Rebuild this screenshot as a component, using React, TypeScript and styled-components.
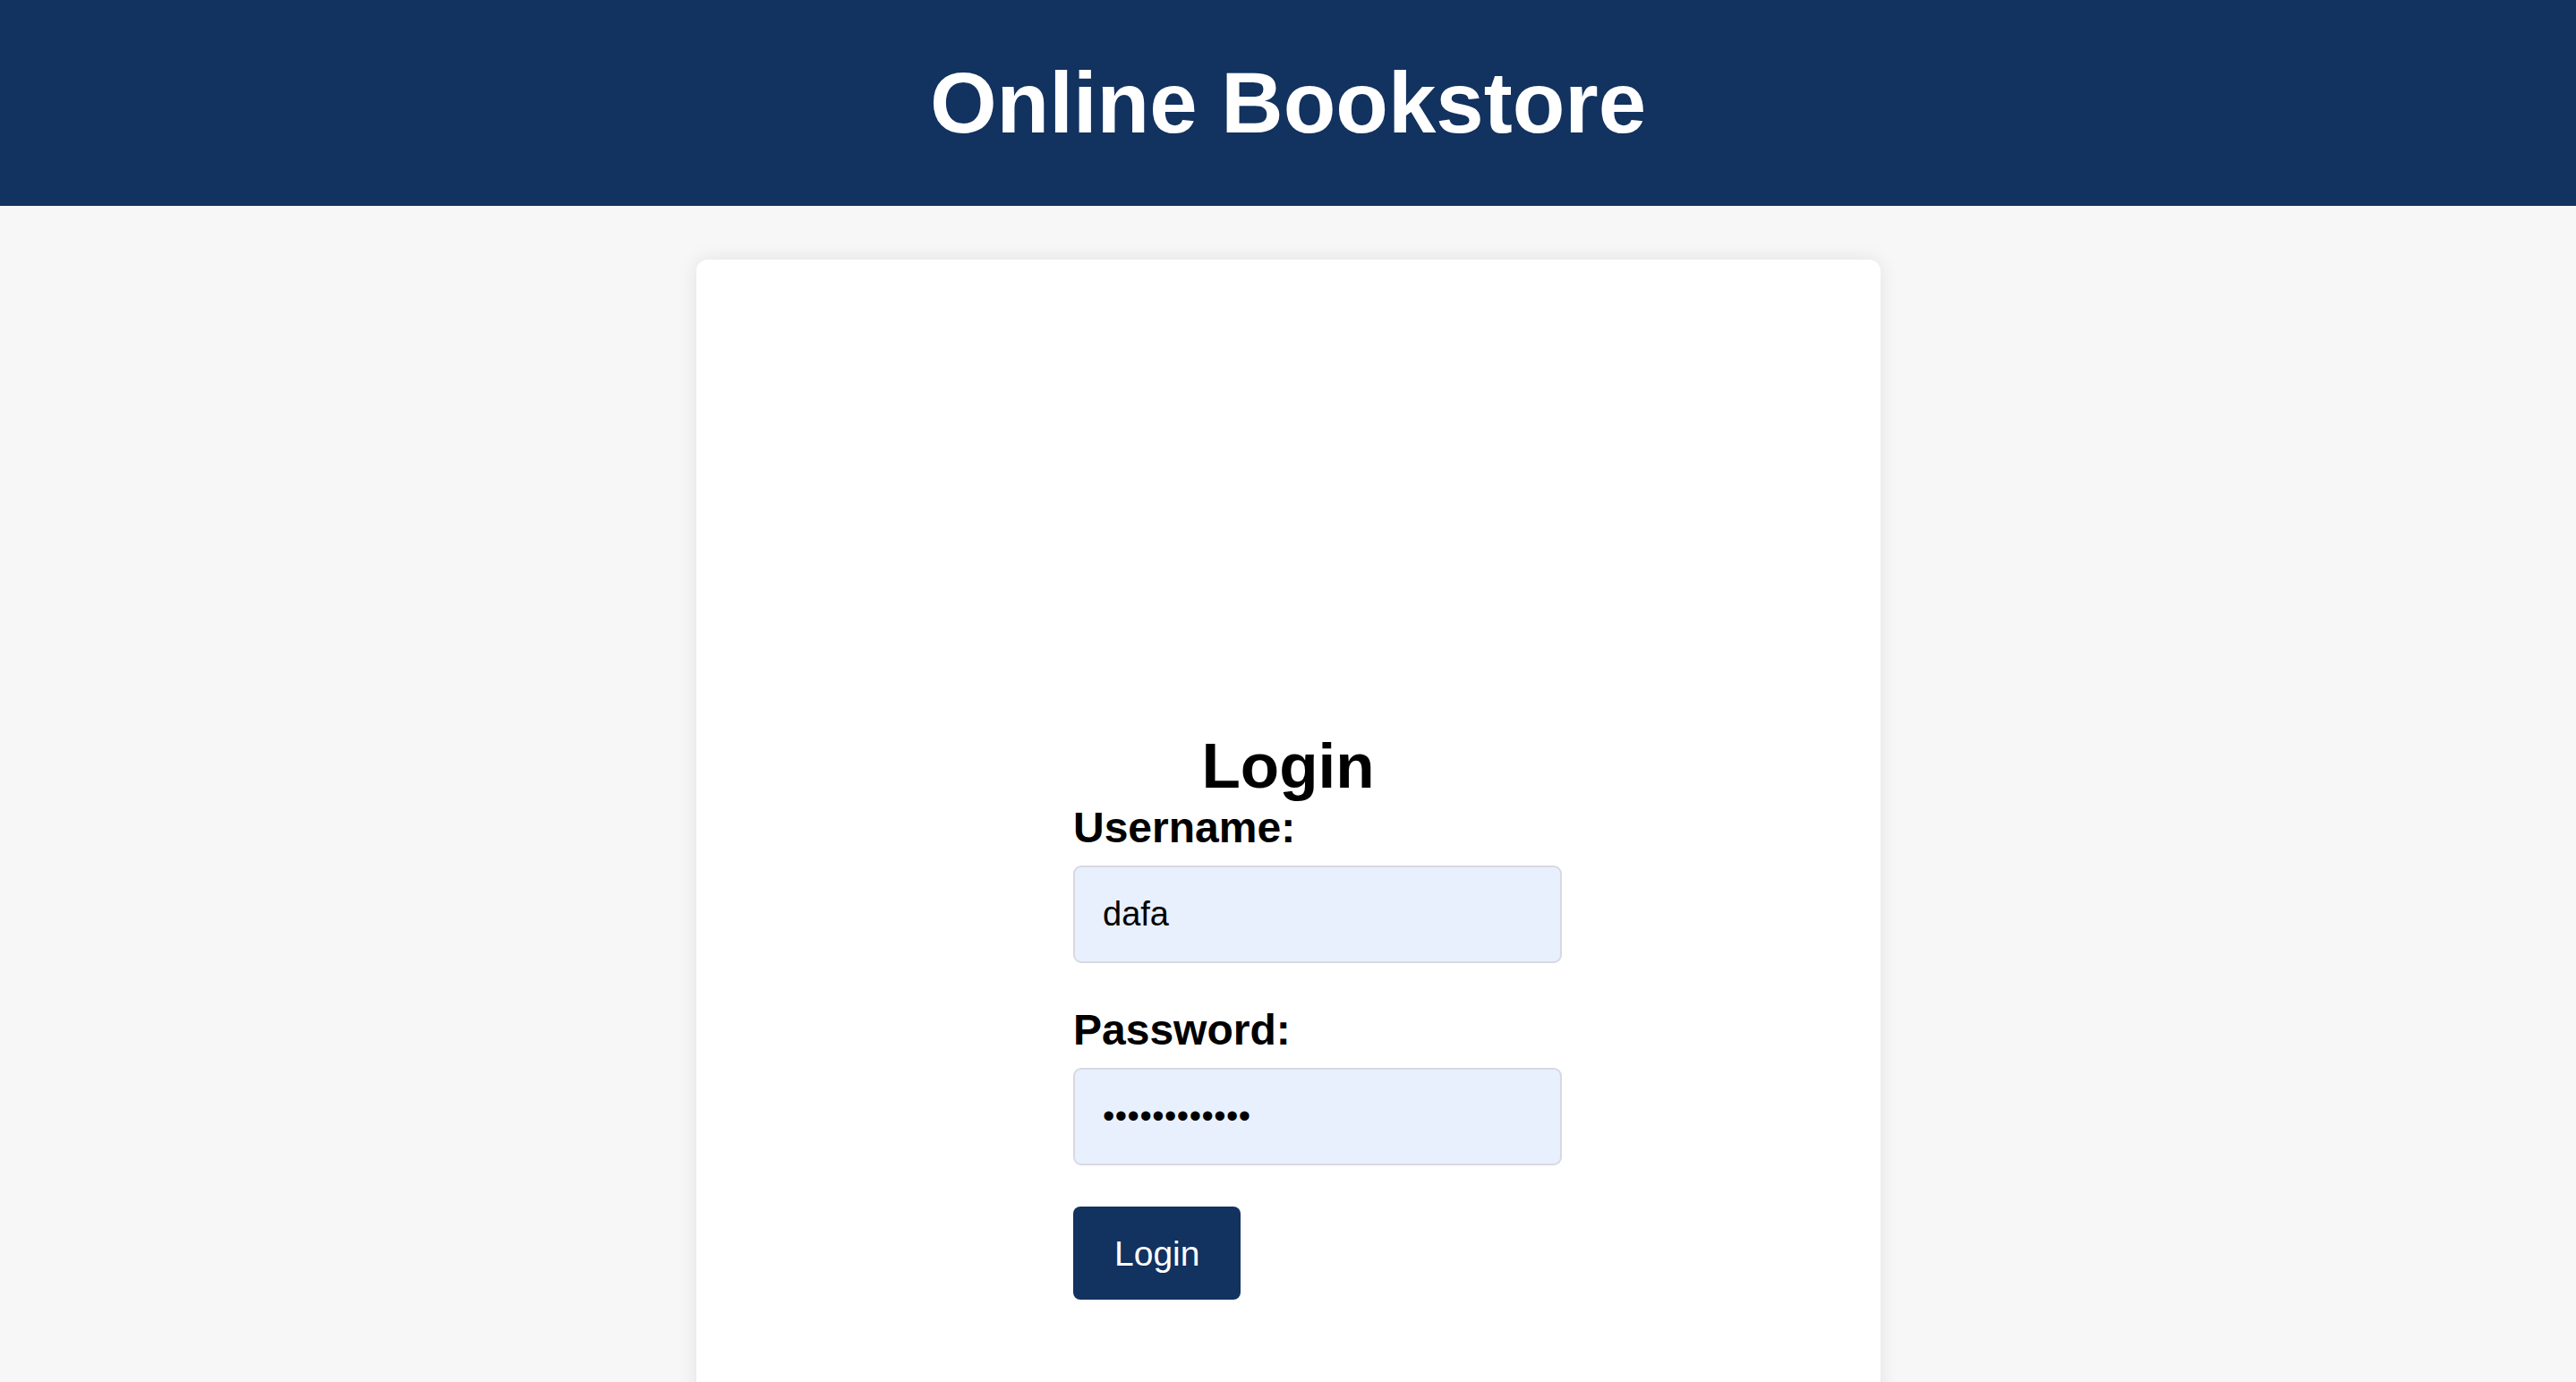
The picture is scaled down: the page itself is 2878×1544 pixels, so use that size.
import React from "react";
import styled, { createGlobalStyle } from "styled-components";

const GlobalStyle = createGlobalStyle`
  html, body {
    margin: 0;
    padding: 0;
    background: #f7f7f7;
    font-family: "Liberation Sans", Arial, Helvetica, sans-serif;
    overflow: hidden;
  }
  * { box-sizing: border-box; }
`;

const Page = styled.div`
  min-height: 1544px;
  background: #f7f7f7;
`;

const Header = styled.header`
  height: 230px;
  background: #12325f;
  display: flex;
  align-items: center;
  justify-content: center;
`;

const Title = styled.h1`
  margin: 0;
  color: #ffffff;
  font-size: 96px;
  font-weight: 700;
  line-height: 1.15;
`;

const Card = styled.main`
  width: 1323px;
  min-height: 1400px;
  margin: 60px auto 0;
  background: #ffffff;
  border-radius: 13px;
  box-shadow: 0 0 22px rgba(0, 0, 0, 0.09);
  padding: 525px 0 60px;
`;

const Form = styled.form`
  width: 480px;
  margin: 0 auto;
  display: flex;
  flex-direction: column;
`;

const Heading = styled.h2`
  margin: 0 0 1px;
  text-align: center;
  color: #000;
  font-size: 71px;
  font-weight: 700;
  line-height: 82px;
`;

const Field = styled.div<{ $gapAfter: number }>`
  display: flex;
  flex-direction: column;
  margin-bottom: ${(p) => p.$gapAfter}px;
`;

const Label = styled.label`
  display: block;
  color: #000;
  font-size: 48px;
  font-weight: 700;
  line-height: 53px;
  margin-bottom: 16px;
`;

const Input = styled.input<{ $spacing?: number }>`
  box-sizing: content-box;
  display: block;
  width: 100%;
  height: 45px;
  padding: 30px 31px;
  border: 2px solid #d6dae0;
  border-radius: 9px;
  background: #e8f0fe;
  color: #000;
  font-family: "Liberation Sans", Arial, Helvetica, sans-serif;
  font-size: 38px;
  line-height: 45px;
  letter-spacing: ${(p) => p.$spacing ?? 0}px;
  outline: none;
`;

const Button = styled.button`
  align-self: flex-start;
  height: 104px;
  padding: 0 46px;
  border: none;
  border-radius: 8px;
  background: #12325f;
  color: #ffffff;
  font-family: "Liberation Sans", Arial, Helvetica, sans-serif;
  font-size: 39px;
  line-height: 45px;
  cursor: pointer;
`;

export default function App() {
  return (
    <Page>
      <GlobalStyle />
      <Header>
        <Title>Online Bookstore</Title>
      </Header>
      <Card>
        <Form onSubmit={(e) => e.preventDefault()}>
          <Heading>Login</Heading>
          <Field $gapAfter={48}>
            <Label htmlFor="username">Username:</Label>
            <Input id="username" type="text" defaultValue="dafa" />
          </Field>
          <Field $gapAfter={46}>
            <Label htmlFor="password">Password:</Label>
            <Input id="password" type="password" $spacing={0.5} defaultValue="dafa12345678" />
          </Field>
          <Button type="submit">Login</Button>
        </Form>
      </Card>
    </Page>
  );
}
